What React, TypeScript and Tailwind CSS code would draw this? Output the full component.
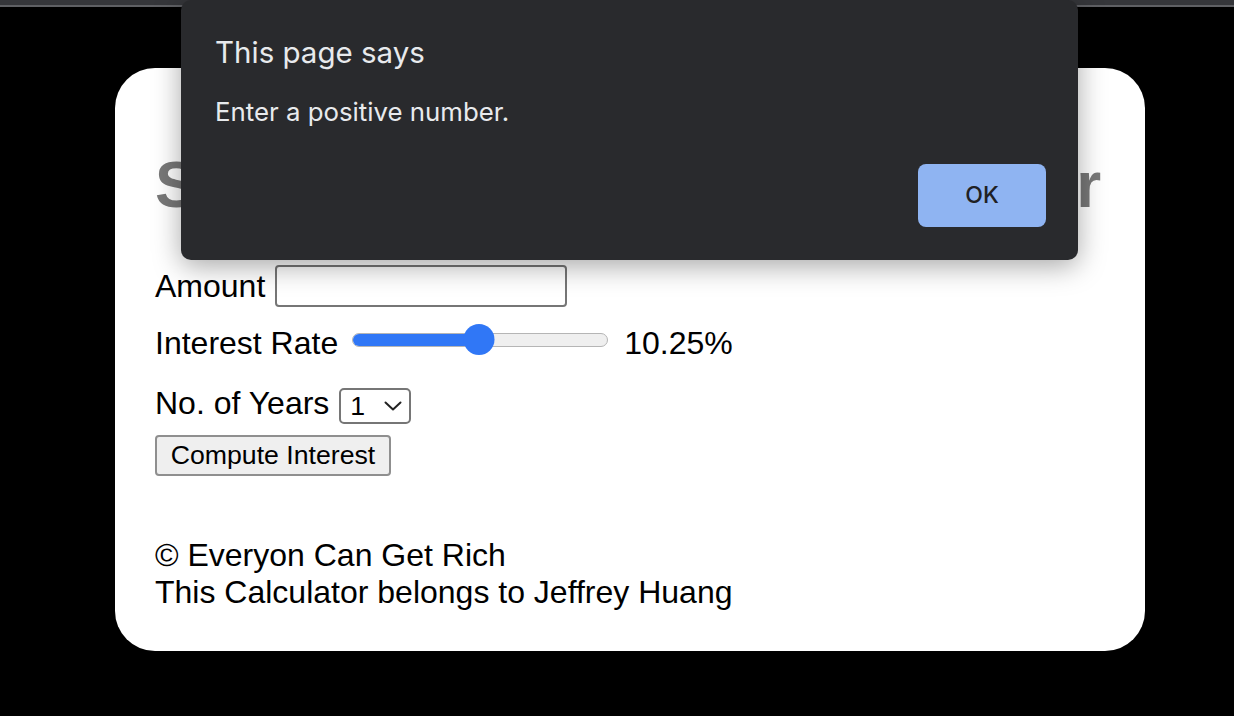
import React from 'react';

const sans = "font-['Liberation_Sans',Arial,sans-serif]";

function RateSlider({ percent }: { percent: number }) {
  return (
    <div className="relative w-[256px] h-[31px] flex items-center">
      <div className="w-full h-[14px] rounded-full bg-[#efefef] border border-[#b5b5b5] overflow-hidden">
        <div className="h-full bg-[#3077f6]" style={{ width: `${percent}%` }} />
      </div>
      {/* thumb */}
      <div
        className="absolute top-0 w-[31px] h-[31px] rounded-full bg-[#3077f6] -translate-x-1/2"
        style={{ left: `${percent}%` }}
      />
    </div>
  );
}

function YearsSelect() {
  return (
    <div className="mt-[3px] shrink-0 w-[72px] h-[36px] border-2 border-[#767676] rounded-[5px] bg-white flex items-center justify-between pl-[9px] pr-[7px]">
      <span className="text-[26.67px] leading-none">1</span>
      <svg width="18" height="10" viewBox="0 0 18 10" fill="none">
        <path d="M1.5 1.5 L9 8.5 L16.5 1.5" stroke="#222" strokeWidth="2" strokeLinecap="round" strokeLinejoin="round" />
      </svg>
    </div>
  );
}

function AlertDialog() {
  return (
    <div className="absolute top-0 left-[181px] w-[897px] h-[260px] rounded-[10px] bg-[#292a2d] shadow-[0_6px_28px_rgba(0,0,0,0.35)] font-['Inter',sans-serif] text-[#e8eaed] pl-[34px] pt-[34px]">
      <div className="text-[29.5px] leading-[36px]">This page says</div>
      <div className="mt-[26px] text-[25.8px] leading-[32px]">Enter a positive number.</div>
      <div className="mt-[36px] flex justify-end pr-[32px]">
        <button className="w-[128px] h-[63px] rounded-[8px] bg-[#8fb4f2] text-[#202124] text-[23px] font-medium">
          OK
        </button>
      </div>
    </div>
  );
}

export default function App() {
  return (
    <div className={`relative w-full min-h-[716px] bg-black overflow-hidden ${sans}`}>
      {/* browser chrome strip */}
      <div className="h-[7px] bg-[#35363a] border-b-2 border-[#5f6064]" />

      <div className="mt-[61px] ml-[115px] w-[1030px] h-[583px] rounded-[40px] bg-white pl-[40px] pt-[40px] text-black">
        <h1 className="mt-[40px] text-[64px] leading-[74px] font-bold text-[#787878] whitespace-nowrap">
          Simple Interest Rate Calculator
        </h1>

        <div className="mt-[43px] h-[42px] flex items-center gap-[10px] text-[32px] leading-[37px]">
          <span>Amount</span>
          <div className="w-[292px] h-[42px] border-2 border-[#767676] rounded-[4px] bg-white" />
        </div>

        <div className="mt-[18px] h-[37px] flex items-start text-[32px] leading-[37px]">
          <span>Interest Rate</span>
          <div className="ml-[14px] -mt-px">
            <RateSlider percent={49.6} />
          </div>
          <span className="ml-[16px]">10.25%</span>
        </div>

        <div className="mt-[23px] h-[39px] flex items-start gap-[10px] text-[32px] leading-[37px]">
          <span>No. of Years</span>
          <YearsSelect />
        </div>

        <button className="mt-[11px] w-[236px] h-[41px] bg-[#efefef] border-2 border-[#8f8f8f] rounded-[4px] text-[26.67px] leading-none">
          Compute Interest
        </button>

        <div className="mt-[61px] text-[32px] leading-[37px]">
          <div>© Everyon Can Get Rich</div>
          <div>This Calculator belongs to Jeffrey Huang</div>
        </div>
      </div>

      <AlertDialog />
    </div>
  );
}
